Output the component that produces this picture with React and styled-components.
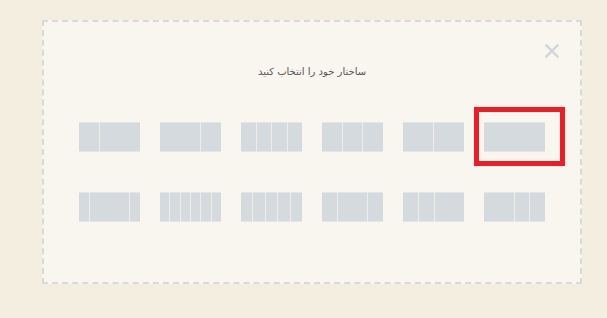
import React from "react";
import styled, { createGlobalStyle } from "styled-components";

const Global = createGlobalStyle`
  html, body { margin: 0; padding: 0; background: #f4eee0; }
  body { font-family: "DejaVu Sans", "Noto Sans", sans-serif; }
`;

const Page = styled.div`
  width: 607px;
  height: 318px;
  padding: 20px 0 0 42px;
  box-sizing: border-box;
`;

const Panel = styled.div`
  width: 540px;
  height: 264px;
  box-sizing: border-box;
  border: 2px dashed #d6dade;
  background: #f9f6ef;
  display: flex;
  flex-direction: column;
  align-items: center;
`;

const CloseRow = styled.div`
  align-self: stretch;
  display: flex;
  justify-content: flex-end;
  padding: 22px 21px 0 0;
`;

const Close = styled.button`
  width: 14px;
  height: 14px;
  padding: 0;
  border: 0;
  background: none;
  display: block;
  cursor: pointer;
`;

const Title = styled.div`
  margin-top: 7px;
  direction: rtl;
  font-size: 10px;
  line-height: 14px;
  color: #555;
`;

const Grid = styled.div`
  margin-top: 43px;
  display: grid;
  grid-template-columns: repeat(6, 61px);
  column-gap: 20px;
  row-gap: 40px;
`;

const Item = styled.div`
  position: relative;
  height: 30px;
  display: flex;
  gap: 1px;
  background: #eeede8;
`;

const Seg = styled.div`
  flex: ${(p) => p.$f};
  background: #d5dadf;
  border-top: 1px solid #e3e5e6;
  border-bottom: 1px solid #e3e5e6;
`;

const Highlight = styled.div`
  position: absolute;
  left: -10px;
  top: -15px;
  width: 91px;
  height: 59px;
  box-sizing: border-box;
  border: 5px solid #ee1c24;
  pointer-events: none;
`;

const layouts = [
  [1, 2],
  [2, 1],
  [1, 1, 1, 1],
  [1, 1, 1],
  [1, 1],
  [1],
  [1, 4, 1],
  [1, 1, 1, 1, 1, 1],
  [1, 1, 1, 1, 1],
  [1, 2, 1],
  [1, 1, 2],
  [2, 1, 1],
];

export default function App() {
  return (
    <>
      <Global />
      <Page>
        <Panel>
          <CloseRow>
            <Close aria-label="close">
              <svg width="14" height="14" viewBox="0 0 14 14">
                <path d="M1.5 1.5L12.5 12.5M12.5 1.5L1.5 12.5" stroke="#d0d5da" strokeWidth="2.4" strokeLinecap="square" />
              </svg>
            </Close>
          </CloseRow>
          <Title>ساختار خود را انتخاب کنید</Title>
          <Grid>
            {layouts.map((l, i) => (
              <Item key={i}>
                {l.map((f, j) => (
                  <Seg key={j} $f={f} />
                ))}
                {i === 5 && <Highlight />}
              </Item>
            ))}
          </Grid>
        </Panel>
      </Page>
    </>
  );
}
